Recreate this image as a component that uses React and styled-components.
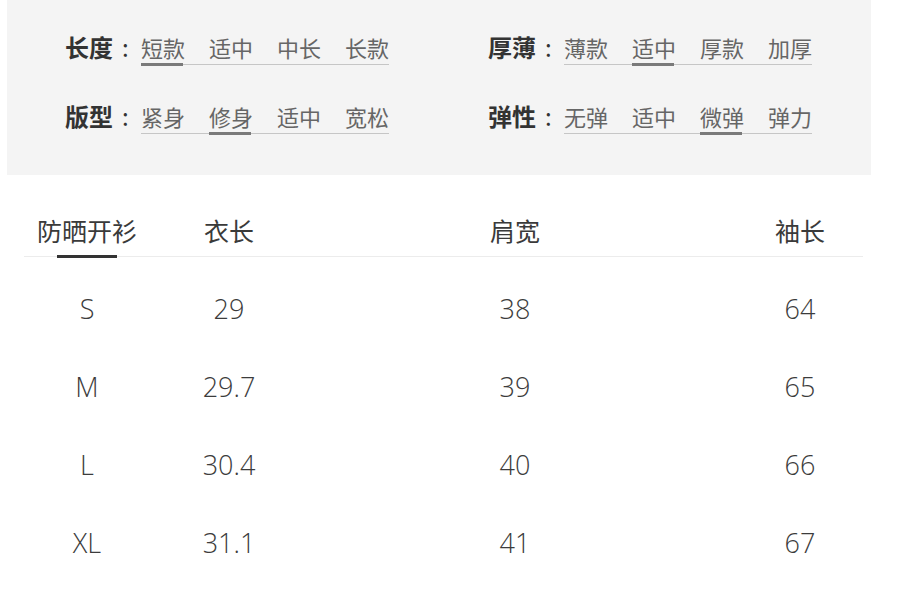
import React from "react";
import styled, { createGlobalStyle } from "styled-components";

const Global = createGlobalStyle`
  html, body { margin: 0; padding: 0; background: #ffffff; }
  body { font-family: "Noto Sans CJK SC", "Noto Sans", sans-serif; }
`;

const Page = styled.div`
  width: 897px;
  height: 604px;
  background: #fff;
  overflow: hidden;
`;

const Panel = styled.section`
  margin-left: 7px;
  width: 864px;
  height: 175px;
  box-sizing: border-box;
  background: #f4f4f4;
  padding: 32px 0 0 58px;
  display: grid;
  grid-template-columns: 423px 1fr;
  grid-auto-rows: 33px;
  row-gap: 36px;
`;

const Attr = styled.div`
  display: flex;
  align-items: flex-start;
`;

const Label = styled.div`
  font-family: "Noto Sans CJK SC", sans-serif;
  font-size: 24px;
  font-weight: 700;
  color: #333;
  line-height: 30px;
  display: flex;
  width: 76px;
  flex: none;
`;

const Colon = styled.span`
  margin-left: 9px;
  font-weight: 400;
`;

const Options = styled.div`
  display: flex;
  gap: 24px;
  border-bottom: 1px solid #c6c6c6;
`;

const Option = styled.span`
  position: relative;
  font-size: 22px;
  line-height: 30px;
  padding-bottom: 2px;
  color: #666;
  &::after {
    content: "";
    display: ${(p) => (p.$active ? "block" : "none")};
    position: absolute;
    left: 0;
    right: 2px;
    bottom: -2px;
    height: 3px;
    background: #7a7a7a;
  }
`;

const Table = styled.div`
  margin: 37px 0 0 24px;
  width: 839px;
`;

const Grid = styled.div`
  display: grid;
  grid-template-columns: 126px 158px 414px 141px;
`;

const HeadRow = styled(Grid)`
  border-bottom: 1px solid #ececec;
  margin-bottom: 13px;
`;

const HeadCell = styled.div`
  position: relative;
  text-align: center;
  font-family: "Noto Sans CJK SC", sans-serif;
  font-size: 25px;
  line-height: 36px;
  padding-bottom: 8px;
  padding-left: ${(p) => (p.$shift ? "15px" : "0")};
  color: #3a3a3a;
  &::after {
    content: "";
    display: ${(p) => (p.$active ? "block" : "none")};
    position: absolute;
    left: 33px;
    width: 60px;
    bottom: -2px;
    height: 3px;
    background: #333;
  }
`;

const Cell = styled.div`
  text-align: center;
  font-family: "Open Sans", "Lato", sans-serif;
  font-weight: 300;
  font-size: 27px;
  line-height: 78px;
  height: 78px;
  padding-left: ${(p) => (p.$shift ? "15px" : "0")};
  color: #3c3c3c;
`;

const attrs = [
  { label: "长度", options: ["短款", "适中", "中长", "长款"], active: 0 },
  { label: "厚薄", options: ["薄款", "适中", "厚款", "加厚"], active: 1 },
  { label: "版型", options: ["紧身", "修身", "适中", "宽松"], active: 1 },
  { label: "弹性", options: ["无弹", "适中", "微弹", "弹力"], active: 2 },
];

const head = ["防晒开衫", "衣长", "肩宽", "袖长"];
const rows = [
  ["S", "29", "38", "64"],
  ["M", "29.7", "39", "65"],
  ["L", "30.4", "40", "66"],
  ["XL", "31.1", "41", "67"],
];

export default function App() {
  return (
    <Page>
      <Global />
      <Panel>
        {attrs.map((a) => (
          <Attr key={a.label}>
            <Label>
              {a.label}
              <Colon>:</Colon>
            </Label>
            <Options>
              {a.options.map((o, i) => (
                <Option key={o + i} $active={i === a.active}>
                  {o}
                </Option>
              ))}
            </Options>
          </Attr>
        ))}
      </Panel>
      <Table>
        <HeadRow>
          {head.map((h, i) => (
            <HeadCell key={h} $active={i === 0} $shift={i === 3}>
              {h}
            </HeadCell>
          ))}
        </HeadRow>
        {rows.map((r) => (
          <Grid key={r[0]}>
            {r.map((c, i) => (
              <Cell key={i} $shift={i === 3}>
                {c}
              </Cell>
            ))}
          </Grid>
        ))}
      </Table>
    </Page>
  );
}
